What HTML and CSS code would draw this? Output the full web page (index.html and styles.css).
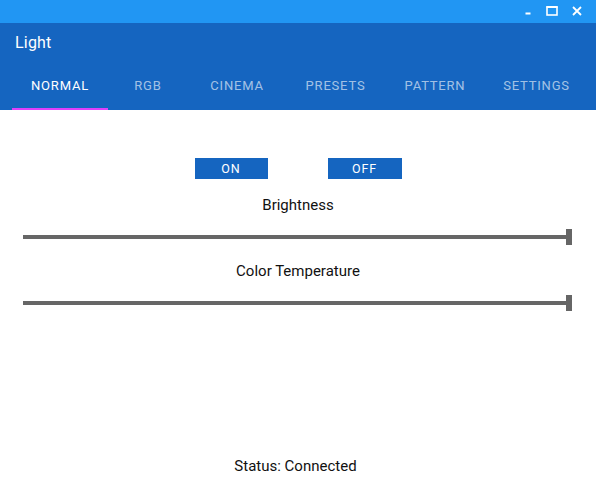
FILE: index.html
```html
<!DOCTYPE html>
<html>
<head>
<meta charset="utf-8">
<link rel="stylesheet" href="styles.css">
</head>
<body>
<div class="window">
  <div class="titlebar">
    <svg class="winbtn" width="12" height="23" viewBox="0 0 12 23"><rect x="3.5" y="12.5" width="5" height="2" fill="#fff"/></svg>
    <svg class="winbtn" width="14" height="23" viewBox="0 0 14 23"><rect x="2" y="7" width="10" height="8" fill="none" stroke="#fff" stroke-width="1.6"/><rect x="1.5" y="6" width="11" height="2" fill="#fff"/></svg>
    <svg class="winbtn" width="14" height="23" viewBox="0 0 14 23"><path d="M3 7 L11 15 M11 7 L3 15" stroke="#fff" stroke-width="1.8"/></svg>
  </div>
  <div class="appbar">
    <div class="apptitle">Light</div>
    <div class="tabs">
      <div class="tab active w1">NORMAL</div>
      <div class="tab w2">RGB</div>
      <div class="tab w3">CINEMA</div>
      <div class="tab w4">PRESETS</div>
      <div class="tab w5">PATTERN</div>
      <div class="tab w6">SETTINGS</div>
    </div>
  </div>
  <div class="content">
    <div class="buttons">
      <div class="btn on">ON</div>
      <div class="btn off">OFF</div>
    </div>
    <div class="label l1">Brightness</div>
    <div class="slider s1"><div class="track"></div><div class="thumb"></div></div>
    <div class="label l2">Color Temperature</div>
    <div class="slider s2"><div class="track"></div><div class="thumb"></div></div>
    <div class="status">Status: Connected</div>
  </div>
</div>
</body>
</html>
```
FILE: styles.css
```css
html, body {
  margin: 0;
  padding: 0;
  background: #fff;
}
body {
  font-family: Roboto, "Liberation Sans", sans-serif;
  width: 596px;
  height: 477px;
  overflow: hidden;
}
.window {
  display: flex;
  flex-direction: column;
  height: 477px;
}
.titlebar {
  height: 23px;
  background: #2196F3;
  display: flex;
  justify-content: flex-end;
  align-items: flex-start;
  padding-right: 12px;
  gap: 11px;
}
.winbtn {
  display: block;
}
.appbar {
  background: #1565C0;
  height: 87px;
  display: flex;
  flex-direction: column;
}
.apptitle {
  height: 39px;
  line-height: 39px;
  color: #fff;
  font-size: 16px;
  font-weight: 400;
  letter-spacing: 0.2px;
  padding-left: 15px;
}
.tabs {
  height: 48px;
  display: flex;
  padding-left: 12px;
}
.tab {
  height: 48px;
  line-height: 48px;
  text-align: center;
  font-size: 13px;
  font-weight: 400;
  letter-spacing: 0.8px;
  color: rgba(255, 255, 255, 0.62);
  box-sizing: border-box;
}
.tab.active {
  color: #fff;
  border-bottom: 2px solid #E040FB;
}
.w1 { width: 96px; }
.w2 { width: 80px; }
.w3 { width: 98px; }
.w4 { width: 99px; }
.w5 { width: 100px; }
.w6 { width: 103px; }
.content {
  flex: 1;
  display: flex;
  flex-direction: column;
}
.buttons {
  margin-top: 48px;
  display: flex;
  justify-content: center;
  gap: 60px;
}
.btn {
  height: 21px;
  line-height: 21px;
  background: #1565C0;
  color: #fff;
  font-size: 12.5px;
  font-weight: 400;
  letter-spacing: 0.9px;
  text-align: center;
}
.on { width: 73px; }
.off { width: 74px; }
.label {
  height: 20px;
  line-height: 20px;
  text-align: center;
  font-size: 15px;
  color: #111;
}
.l1 { margin-top: 16px; }
.l2 { margin-top: 16px; }
.slider {
  display: flex;
  align-items: center;
  height: 16px;
  margin: 14px 24px 0 23px;
}
.s2 { margin-top: 14px; }
.track {
  flex: 1;
  height: 4px;
  background: #666;
}
.thumb {
  width: 6px;
  height: 16px;
  background: #666;
}
.status {
  margin-top: auto;
  margin-bottom: 1px;
  padding-right: 5px;
  height: 20px;
  line-height: 20px;
  text-align: center;
  font-size: 15px;
  color: #111;
}
```
